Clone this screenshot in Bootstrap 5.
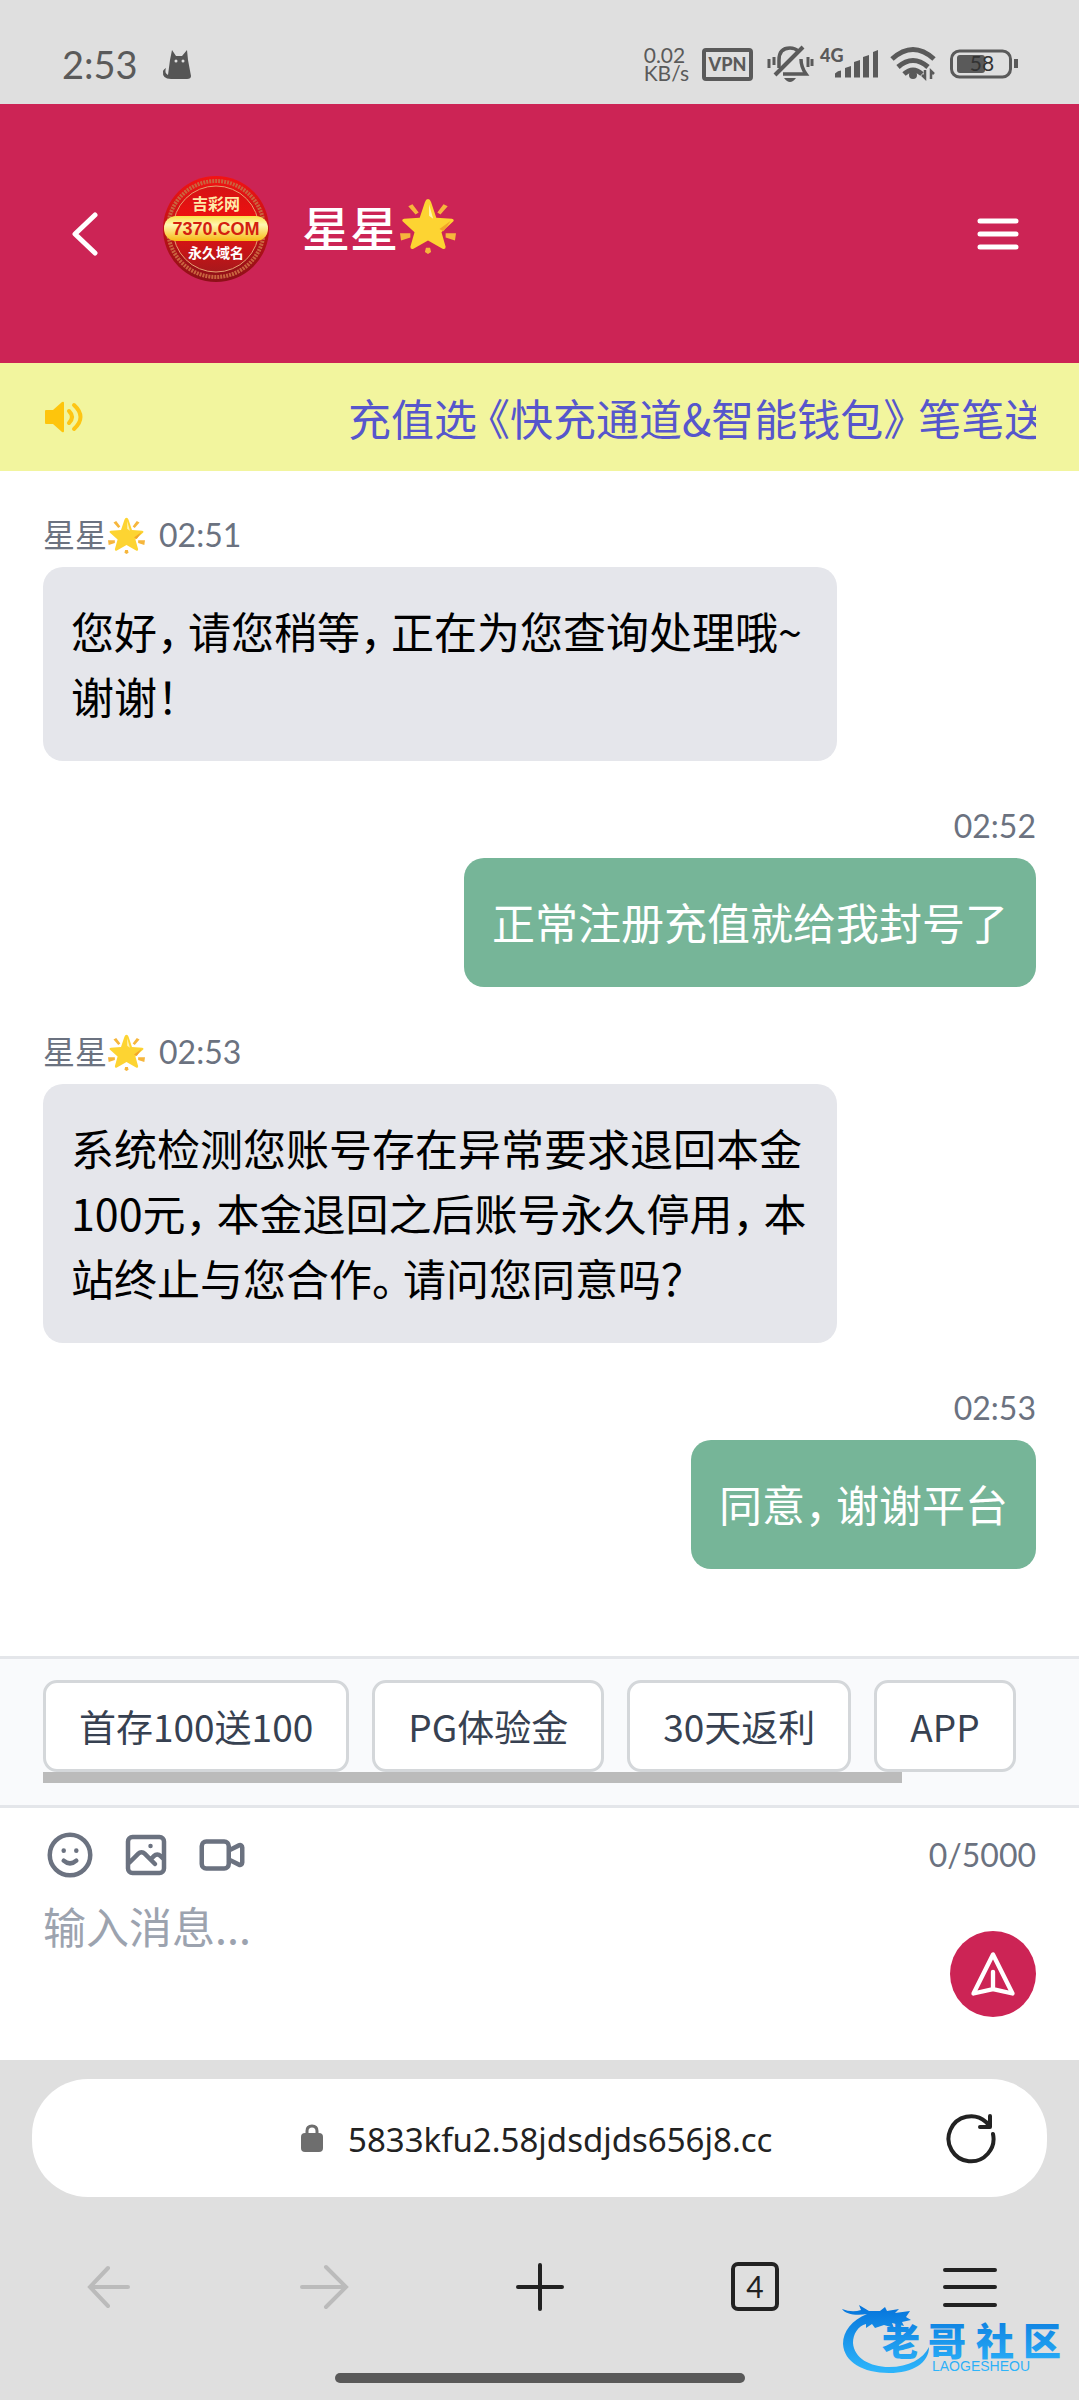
<!DOCTYPE html>
<html lang="zh-CN">
<head>
<meta charset="utf-8">
<meta name="viewport" content="width=device-width, initial-scale=1">
<title>在线客服</title>
<link href="https://cdn.jsdelivr.net/npm/bootstrap@5.3.0/dist/css/bootstrap.min.css" rel="stylesheet">
<style>
  :root { --brand: #cc2455; --chrome: #dfdfdf; --ink: #5a5a5a; }
  body { font-family: "Noto Sans CJK SC", "Noto Sans", sans-serif; background: #fff; color: #000; min-height: 100vh; }
  svg { display: block; flex: none; }
  button { background: none; border: 0; padding: 0; color: inherit; }
  .status-bar { background: var(--chrome); height: 104px; padding: 24px 60px 0 62px; color: var(--ink); }
  .clock { font: 38px/44px Lato, sans-serif; }
  .net-rate { font: 21px/18px Lato, sans-serif; }
  .chat-head { background: var(--brand); height: 259px; padding: 0 60px 0 72px; color: #fff; }
  .chat-title { font-size: 48px; line-height: 64px; font-weight: 500; gap: 2px; }
  .notice { background: #f2f59e; height: 108px; padding: 0 43px; }
  .ticker { margin-left: 263px; color: #5656cc; font-size: 43px; line-height: 64px; white-space: nowrap; overflow: hidden; }
  .thread { padding: 40px 43px 87px; }
  .meta { font-family: Lato, "Noto Sans CJK SC", sans-serif; font-size: 32px; line-height: 48px; color: #6b7280; gap: 1px; }
  .meta-gap { margin-right: 13px; }
  .bubble { font-size: 43px; line-height: 65px; padding: 31px 28px 33px; border-radius: 20px; max-width: 80%; margin-top: 8px; margin-bottom: 41px; }
  .bubble-in { background: #e5e6eb; }
  .bubble-out { background: #76b598; color: #fff; }
  .punct-end { margin-right: -12px; }
  .punct-start { margin-left: -10px; }
  .ticker .punct-end { margin-right: -8px; }
  .quick { background: #f9fafc; border-top: 3px solid #e4e6ea; border-bottom: 3px solid #e4e6ea; padding: 21px 43px; height: 152px; }
  .quick-row { gap: 23px; }
  .quick-btn { background: #fff; border: 3px solid #d4d7da; border-radius: 14px; color: #374151; font-size: 37px; line-height: 48px; padding: 19px 33px; white-space: nowrap; flex: none; }
  .quick-bar { background: #bbb; height: 11px; width: 86.5%; }
  .composer { padding: 20px 43px 43px; color: #6b7280; }
  .tool-row { gap: 22px; margin-bottom: 12px; }
  .msg-box { border: 0; padding: 0; resize: none; font-size: 43px; line-height: 62px; height: 123px; outline: 0; background: none; }
  .msg-box::placeholder { color: #9ca3af; opacity: 1; }
  .send { width: 86px; height: 86px; background: var(--brand); border-radius: 50%; }
  .browser { background: var(--chrome); padding: 19px 32px 0; height: 340px; color: #222; }
  .address { background: #fff; border-radius: 56px; height: 118px; padding: 0 50px 0 268px; }
  .address-text { font: 33px/44px "Noto Sans", sans-serif; color: #222; padding-top: 3px; }
  .tools { padding: 0 47px; margin-top: 60px; height: 60px; }
  .home-line { width: 410px; height: 10px; border-radius: 5px; background: #595959; margin: 56px auto 0; }
  .watermark { right: 12px; bottom: 24px; }
</style>
</head>
<body class="d-flex flex-column position-relative">

<svg width="0" height="0" class="position-absolute" aria-hidden="true">
  <defs>
    <symbol id="star" viewBox="0 0 54 54">
      <g fill="#f6b63c"><path d="M8 8l4-2 6 8-3 2zM46 8l-4-2-6 8 3 2zM0 34l10 0 0 4-9 3zM54 34l-10 0 0 4 9 3zM25 48h4l1 4-3 2-3-2z"/></g>
      <path d="M27 1q2 0 3 3l5 15 15 1q3 1 1 3L40 33l4 14q0 3-3 2L27 41 13 49q-3 1-3-2l4-14L3 23q-2-2 1-3l15-1 5-15q1-3 3-3z" fill="#fdd432"/>
      <path d="M28 6l4 14-4-3z" fill="#fff3b0"/><path d="M38 30l11-8-7 10z" fill="#f2a52a"/>
    </symbol>
  </defs>
</svg>

<header class="status-bar d-flex justify-content-between align-items-center">
  <div class="d-flex gap-4 align-items-center">
    <span class="clock">2:53</span>
    <svg width="30" height="30" viewBox="0 0 30 30"><path d="M8 11L10 1l4 6h6l5-6 1 10 3 16q0 3-4 3H9q-9 0-8-8 1-2 3-3-2 5 2 7z" fill="#555"/><circle cx="14" cy="12" r="1.500" fill="#dfdfdf"/><circle cx="21" cy="12" r="1.500" fill="#dfdfdf"/></svg>
  </div>
  <div class="d-flex align-items-center">
    <div class="net-rate me-2">0.02<br>KB/s</div>
    <svg width="322" height="50" viewBox="0 0 322 50" fill="none" stroke="#5a5a5a">
      <rect x="7" y="11" width="47" height="29" rx="2" stroke-width="4"/>
      <text x="30.500" y="32" text-anchor="middle" font-family="Lato" font-weight="900" font-size="18" fill="#5a5a5a" stroke="none">VPN</text>
      <g transform="translate(2 0)">
        <g stroke-width="3.500"><path d="M80 29V21q0-12 11-12 5 0 8 3M102 20q0 8 5 15H84"/><path d="M76 36L104 8" stroke-width="4"/><path d="M70 20v9M75 18v8M109 18v10M113 20v7" stroke-width="3"/></g>
        <path d="M85 39h12q-6 8-12 0z" fill="#5a5a5a" stroke="none"/>
      </g>
      <text x="123" y="23" font-family="Lato" font-weight="900" font-size="18" fill="#5a5a5a" stroke="none">4G</text>
      <g transform="translate(3 1)">
        <path d="M135 37.500v-4q3-3 6-3v7zM145 37.500V28l6-2v11.500zM154 37.500V22l6-2v17.500zM163 37.500V17l6-2v22.500zM173 37.500V12l5-2v27.500z" fill="#5a5a5a" stroke="none"/>
        <g stroke-width="5"><path d="M192 19q21-19 42 0M198 27q15-13 30 0M204 34q9-8 18 0"/></g><circle cx="213" cy="35" r="4" fill="#5a5a5a" stroke="none"/>
        <path d="M225 30v8l-3-3M231 39v-8l3 3" stroke-width="2.500"/>
      </g>
      <rect x="254.500" y="12" width="59" height="26" rx="8" stroke-width="3"/>
      <rect x="260" y="16" width="28" height="18" rx="3" fill="#5a5a5a" stroke="none"/>
      <path d="M319 20v9" stroke-width="4"/>
      <text x="285" y="32" text-anchor="middle" font-family="Lato" font-size="21" fill="#333" stroke="none">58</text>
    </svg>
  </div>
</header>

<nav class="chat-head d-flex align-items-center">
  <button type="button" aria-label="返回"><svg width="26" height="44" viewBox="0 0 26 44" fill="none" stroke="#fff" stroke-width="5" stroke-linecap="round" stroke-linejoin="round"><path d="M23 3L3 22l20 19"/></svg></button>
  <svg class="ms-5 me-3 mb-2" width="140" height="110" viewBox="0 0 140 110">
    <defs>
      <linearGradient id="redG" x1="0" y1="0" x2="0" y2="1"><stop offset="0" stop-color="#f31313"/><stop offset="1" stop-color="#8d1018"/></linearGradient>
      <linearGradient id="innerG" x1="0" y1="0" x2="0" y2="1"><stop offset="0" stop-color="#d41414"/><stop offset=".4" stop-color="#f01010"/><stop offset="1" stop-color="#a8181c"/></linearGradient>
      <linearGradient id="goldG" x1="0" y1="0" x2="0" y2="1"><stop offset="0" stop-color="#fbe04a"/><stop offset=".35" stop-color="#fff6b0"/><stop offset="1" stop-color="#f8b913"/></linearGradient>
    </defs>
    <circle cx="70" cy="54" r="53" fill="url(#redG)"/>
    <circle cx="70" cy="54" r="48" fill="none" stroke="#c9643f" stroke-width="4" stroke-dasharray="2 1"/>
    <circle cx="70" cy="54" r="43" fill="url(#innerG)" stroke="#e6a070" stroke-width="1"/>
    <rect x="18" y="41" width="104" height="25" rx="12" fill="url(#goldG)"/>
    <g text-anchor="middle" font-family="Noto Sans CJK SC" font-weight="700">
      <text x="70" y="35" font-size="16" fill="#ffe9a8">吉彩网</text>
      <text x="70" y="60" font-size="18" font-family="Liberation Sans" fill="#d3200f">7370.COM</text>
      <text x="70" y="83" font-size="14" fill="#fff">永久域名</text>
    </g>
  </svg>
  <h1 class="chat-title mb-3 d-flex align-items-center">星星<svg width="56" height="56"><use href="#star"/></svg></h1>
  <button type="button" class="ms-auto" aria-label="菜单"><svg width="42" height="36" viewBox="0 0 42 36" stroke="#fff" stroke-width="5" stroke-linecap="round"><path d="M3 5h36M3 18h36M3 31h36"/></svg></button>
</nav>

<section class="notice d-flex align-items-center">
  <svg width="42" height="34" viewBox="0 0 42 34"><path d="M3 10h7l9-8q2-1 2 1v28q0 2-2 1l-9-8H3q-1 0-1-1V11q0-1 1-1z" fill="#fec50c"/><path d="M26 11q6 6 0 12M31 5q13 12 0 24" fill="none" stroke="#fec514" stroke-width="4" stroke-linecap="round"/></svg>
  <div class="ticker">充值选<span class="punct-start">《</span>快充通道&amp;智能钱包<span class="punct-end">》</span>笔笔送</div>
</section>

<main class="thread d-flex flex-column flex-grow-1">
  <div class="meta d-flex align-items-center">星星<svg class="meta-gap" width="37" height="37"><use href="#star"/></svg>02:51</div>
  <div class="bubble bubble-in align-self-start">您好<span class="punct-end">，</span>请您稍等<span class="punct-end">，</span>正在为您查询处理哦~谢谢！</div>
  <div class="meta align-self-end">02:52</div>
  <div class="bubble bubble-out align-self-end">正常注册充值就给我封号了</div>
  <div class="meta d-flex align-items-center">星星<svg class="meta-gap" width="37" height="37"><use href="#star"/></svg>02:53</div>
  <div class="bubble bubble-in align-self-start">系统检测您账号存在异常要求退回本金100元<span class="punct-end">，</span>本金退回之后账号永久停用<span class="punct-end">，</span>本站终止与您合作<span class="punct-end">。</span>请问您同意吗？</div>
  <div class="meta align-self-end">02:53</div>
  <div class="bubble bubble-out align-self-end mb-0">同意<span class="punct-end">，</span>谢谢平台</div>
</main>

<section class="quick">
  <div class="quick-row d-flex overflow-hidden">
    <button type="button" class="quick-btn">首存100送100</button>
    <button type="button" class="quick-btn">PG体验金</button>
    <button type="button" class="quick-btn">30天返利</button>
    <button type="button" class="quick-btn">APP</button>
  </div>
  <div class="quick-bar"></div>
</section>

<form class="composer">
  <div class="tool-row d-flex align-items-center">
    <button type="button" aria-label="表情"><svg width="54" height="54" viewBox="0 0 24 24" fill="none" stroke="#6b7280" stroke-width="2" stroke-linecap="round"><circle cx="12" cy="12" r="9"/><path d="M9.200 10v.1M14.800 10v.1M9.200 14.500q2.800 2.500 5.600 0"/></svg></button>
    <button type="button" aria-label="图片"><svg width="54" height="54" viewBox="0 0 24 24" fill="none" stroke="#6b7280" stroke-width="2" stroke-linecap="round" stroke-linejoin="round"><path d="M4 16l4.600-4.600a2 2 0 0 1 2.800 0L16 16m-2-2l1.600-1.600a2 2 0 0 1 2.800 0L20 14M14 8h.01M6 20h12a2 2 0 0 0 2-2V6a2 2 0 0 0-2-2H6a2 2 0 0 0-2 2v12a2 2 0 0 0 2 2z"/></svg></button>
    <button type="button" aria-label="视频"><svg width="54" height="54" viewBox="0 0 24 24" fill="none" stroke="#6b7280" stroke-width="2" stroke-linecap="round" stroke-linejoin="round"><path d="M15 10l4.550-2.280A1 1 0 0 1 21 8.620v6.760a1 1 0 0 1-1.450.9L15 14M5 18h8a2 2 0 0 0 2-2V8a2 2 0 0 0-2-2H5a2 2 0 0 0-2 2v8a2 2 0 0 0 2 2z"/></svg></button>
    <span class="meta ms-auto">0/5000</span>
  </div>
  <div class="d-flex align-items-end">
    <textarea class="msg-box flex-grow-1" aria-label="输入消息" placeholder="输入消息..."></textarea>
    <button type="button" class="send d-flex align-items-center justify-content-center" aria-label="发送"><svg width="52" height="52" viewBox="0 0 24 24" fill="none" stroke="#fff" stroke-width="2" stroke-linecap="round" stroke-linejoin="round"><path d="M12 19l9 2-9-18-9 18zM12 19v-8"/></svg></button>
  </div>
</form>

<footer class="browser">
  <div class="address d-flex align-items-center">
    <svg class="me-4" width="24" height="30" viewBox="0 0 24 30"><path d="M7 13V8q0-5 5-5t5 5v5" fill="none" stroke="#6e6e6e" stroke-width="3"/><rect x="1" y="10" width="22" height="19" rx="4" fill="#6e6e6e"/></svg>
    <a href="#" class="address-text text-decoration-none">5833kfu2.58jdsdjds656j8.cc</a>
    <button type="button" class="ms-auto" aria-label="刷新"><svg width="52" height="52" viewBox="0 0 52 52" fill="none" stroke="#222" stroke-width="4" stroke-linecap="round" stroke-linejoin="round"><path d="M48 22A22.500 22.500 0 1 1 41 10l3 3M45 4v11H35"/></svg></button>
  </div>
  <div class="tools d-flex justify-content-between align-items-center">
    <button type="button" aria-label="后退"><svg width="60" height="54" viewBox="0 0 60 54" fill="none" stroke="#bbb" stroke-width="4" stroke-linecap="round"><path d="M49 27H11M29 8L11 27l18 19"/></svg></button>
    <button type="button" aria-label="前进"><svg width="60" height="54" viewBox="0 0 60 54" fill="none" stroke="#bbb" stroke-width="4" stroke-linecap="round"><path d="M8 27h44M32 7l20 20-20 20"/></svg></button>
    <button type="button" aria-label="新标签页"><svg width="60" height="54" viewBox="0 0 60 54" stroke="#222" stroke-width="4" stroke-linecap="round"><path d="M8 27h44M30 5v44"/></svg></button>
    <button type="button" aria-label="标签页"><svg width="60" height="54" viewBox="0 0 60 54"><rect x="8" y="4" width="44" height="45" rx="5" fill="none" stroke="#222" stroke-width="4"/><text x="30" y="38" text-anchor="middle" font-family="Lato" font-size="30" fill="#222">4</text></svg></button>
    <button type="button" aria-label="浏览器菜单"><svg width="60" height="54" viewBox="0 0 60 54" stroke="#222" stroke-width="4" stroke-linecap="round"><path d="M5 10h50M5 27h50M5 45h50"/></svg></button>
  </div>
  <div class="home-line"></div>
</footer>

<svg class="watermark position-absolute" width="226" height="76" viewBox="0 0 226 76">
  <defs><linearGradient id="blueG" gradientUnits="userSpaceOnUse" x1="0" y1="10" x2="0" y2="70"><stop offset="0" stop-color="#0878dd"/><stop offset="1" stop-color="#2db4fa"/></linearGradient></defs>
  <g fill="url(#blueG)">
    <path d="M1 9q10 4 19 1l-2-5 10 6 11 0 5-4 2 4 12-2-4 4 15-2-4 6 5 3-9 2 2 4-12-3 2 5-10-3-9 3-3-4-6 4v-4C17 26 12 34 12 43c1 15 17 24 36 24 20 0 34-8 40-20 0 16-16 26-40 26C22 73 3 62 2 44 2 31 11 20 26 14 15 16 4 14 1 9z"/>
    <g font-family="Noto Sans CJK SC" font-weight="900" font-size="38">
      <text x="41" y="55">老</text>
      <text x="87" y="55">哥</text>
      <text x="135" y="55">社</text>
      <text x="182" y="55">区</text>
    </g>
    <text x="91" y="71" font-family="Liberation Sans" font-size="14">LAOGESHEOU</text>
  </g>
</svg>

<script src="https://cdn.jsdelivr.net/npm/bootstrap@5.3.0/dist/js/bootstrap.bundle.min.js"></script>
</body>
</html>
